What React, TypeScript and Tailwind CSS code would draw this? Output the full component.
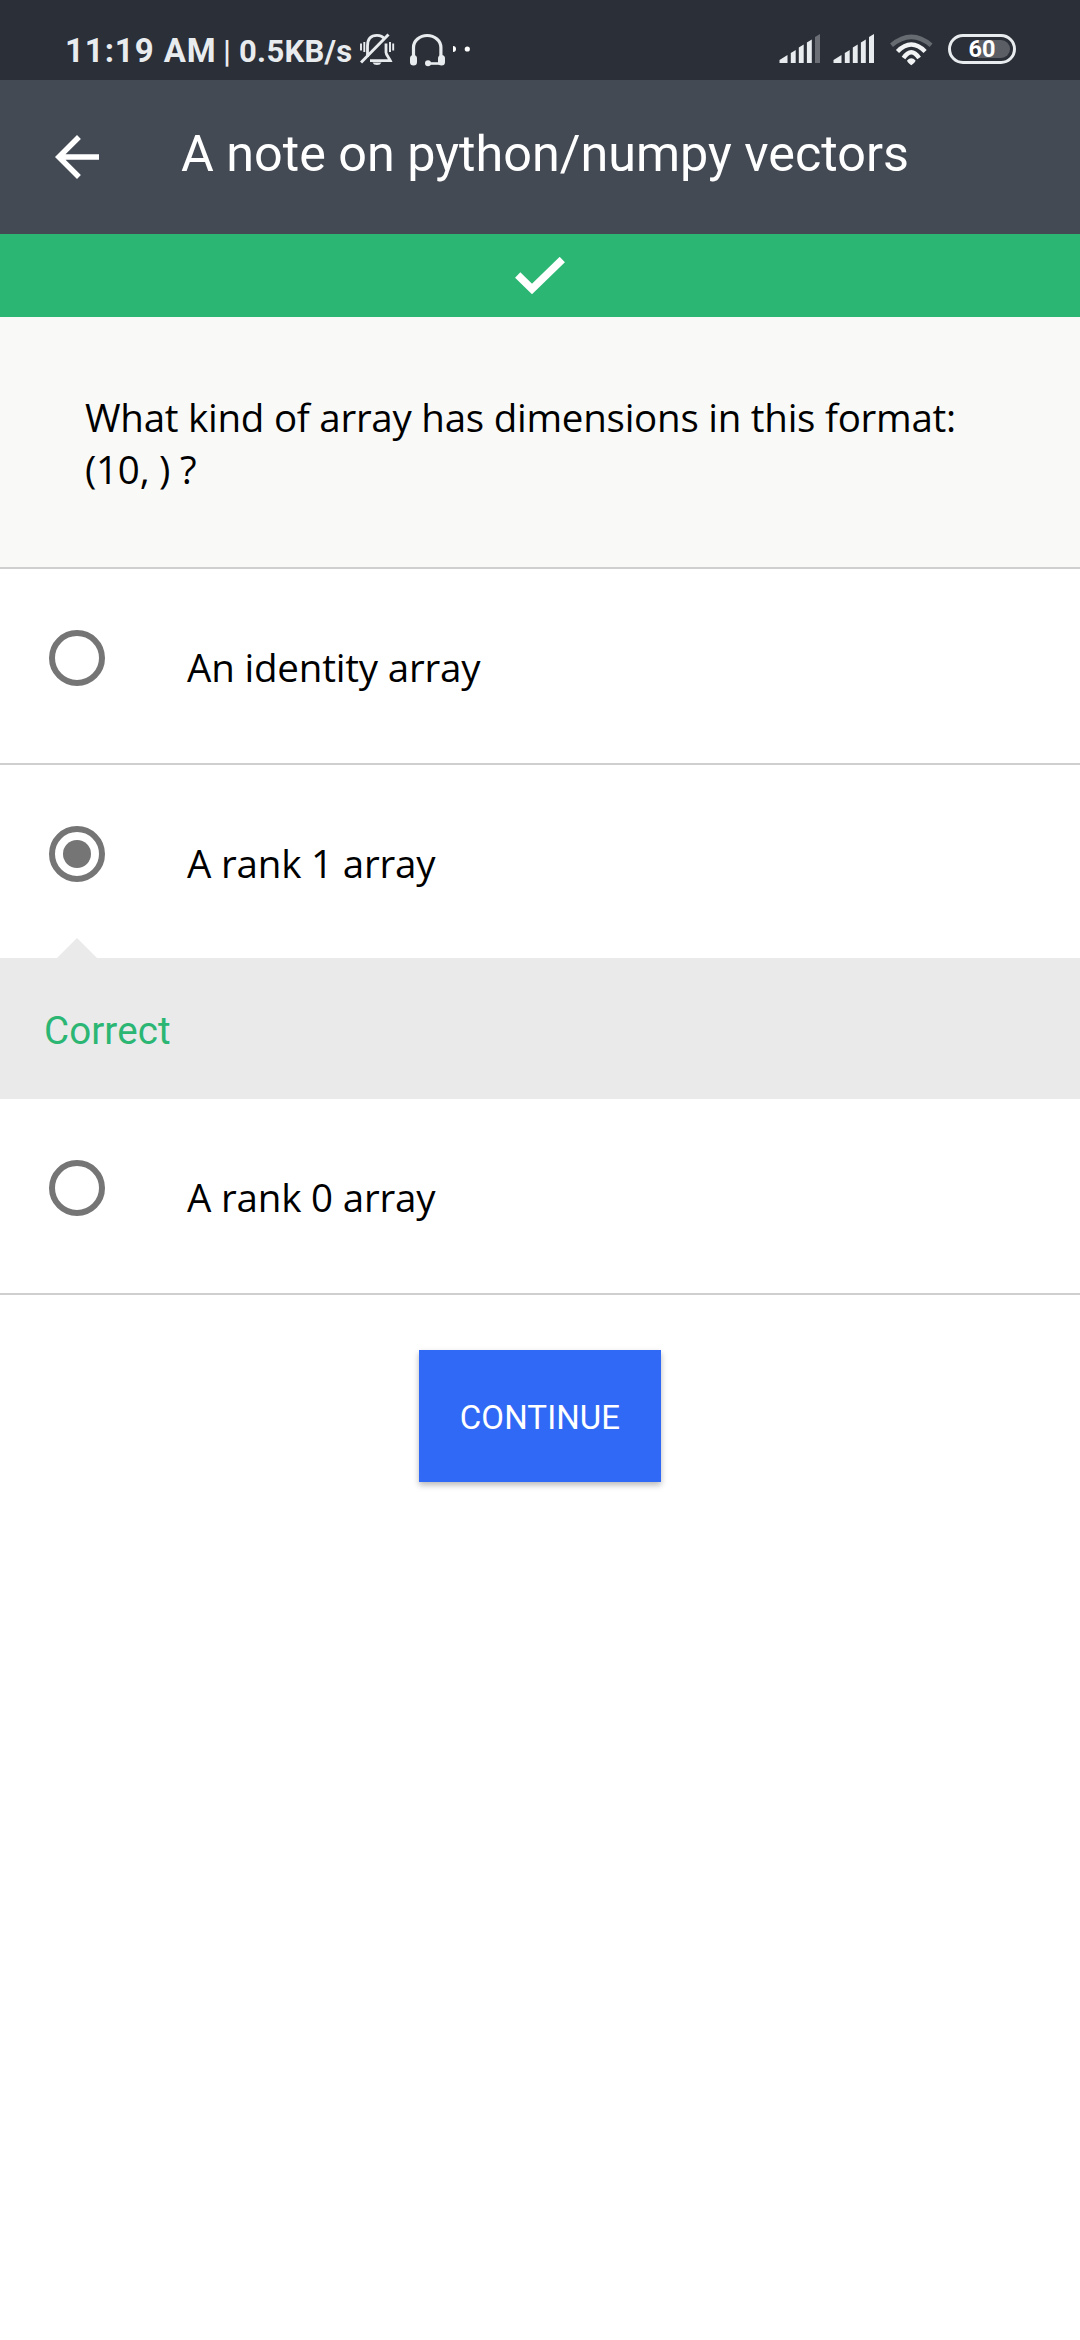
import React from "react";

function StatusBar() {
  return (
    <div className="flex h-[80px] items-center bg-[#2b2f37] pl-[65px] pr-[64px] pt-[20px] text-[#e9ecef]">
      <div className="flex h-full items-center whitespace-nowrap pt-[2px] font-bold">
        <span className="w-[152px] text-[33px] leading-[40px] tracking-[0.9px]">11:19 AM</span>
        <span className="ml-[6px] w-[16px] text-[32px] font-medium leading-[40px]">|</span>
        <span className="w-[115px] pt-[1px] text-[31px] leading-[40px] tracking-[0.3px]">0.5KB/s</span>
      </div>
      <svg className="ml-[6px] h-[40px] w-[110px]" viewBox="360 30 110 40" fill="none" stroke="#e9ecef" strokeWidth="2.8">
        <path d="M367.500 57V46C367.500 38.500 371.500 35.400 377 35.400c3.200 0 5.800 1.200 7.500 3.600M386 43.500v9c0 2 2.800 5 4.300 8.200h-20.300" />
        <path d="M361 62.500L388.500 34.500" strokeWidth="3" />
        <path d="M372.500 62.500h9a4.800 4 0 0 1-9 0z" fill="#e9ecef" stroke="none" />
        <path d="M361 43.500v7M364.300 42v10M390 42v10M393.200 43.500v7" strokeWidth="1.900" />
        <path d="M413.500 56V47.500a13.700 12 0 0 1 27.400 0V56" strokeWidth="3.200" />
        <path d="M429 63.500h12" strokeWidth="2.600" />
        <rect x="410" y="55" width="7" height="10.500" rx="3.500" fill="#e9ecef" stroke="none" />
        <rect x="438" y="55" width="7" height="10.500" rx="3.500" fill="#e9ecef" stroke="none" />
        <circle cx="428" cy="63.300" r="3" fill="#e9ecef" stroke="none" />
        <path d="M453 46a3 3 0 0 1 0 6z" fill="#fff" stroke="none" />
        <circle cx="467.300" cy="49" r="2.600" fill="#fff" stroke="none" />
      </svg>
      <div className="ml-auto flex items-center">
        <Signal dimLast />
        <Signal />
        <svg className="ml-[15px] h-[40px] w-[44px]" viewBox="889 30 44 40" fill="none" stroke="#f1f3f5" strokeWidth="4.400">
          <path d="M891.500 45.200Q911.300 28.500 931.100 45.200" stroke="#666a71" />
          <path d="M897.500 51.500Q911.300 37.500 925.100 51.500" />
          <path d="M903.500 58Q911.300 46.500 919.100 58" />
          <path d="M907 60.500q4.300-4.500 8.600 0q0 1.500-4.300 4.700q-4.300-3.200-4.300-4.700z" fill="#f1f3f5" stroke="none" />
        </svg>
        <div className="mb-[2px] ml-[15px] flex h-[30px] w-[68px] items-center rounded-full border-[3px] border-[#e9ecef] p-[3px]">
          <div className="flex h-full w-full items-center justify-center rounded-full bg-linear-to-r from-transparent from-42% to-[#5b5e64] to-42%">
            <span className="pt-[2px] text-[23.500px] font-bold leading-none text-white">60</span>
          </div>
        </div>
      </div>
    </div>
  );
}

function Signal({ dimLast = false }: { dimLast?: boolean }) {
  return (
    <svg className={dimLast ? "h-[40px] w-[41px]" : "ml-[13px] h-[40px] w-[41px]"} viewBox="779 30 41 40" fill="#e9ecef">
      <path d="M779.500 60l8-5V63h-8zM790.800 53l4.900-3v13h-4.900zM798.800 47.500l4.900-3V63h-4.900zM806.900 42.500l4.900-3V63h-4.900z" />
      <path d="M815 37l5-3v29h-5z" fill={dimLast ? "#6b6f75" : "#e9ecef"} />
    </svg>
  );
}

function Option({ label, checked = false }: { label: string; checked?: boolean }) {
  return (
    <div
      className={
        checked
          ? "flex h-[193px] items-start bg-white pl-[49px]"
          : "flex h-[196px] items-start border-b-2 border-[#cfcfcf] bg-white pl-[49px]"
      }
    >
      <div className="mt-[61px] flex size-[56px] items-center justify-center rounded-full border-[6px] border-[#757575]">
        {checked && <div className="size-[28px] rounded-full bg-[#757575]" />}
      </div>
      <span className="ml-[82px] mt-[72px] whitespace-nowrap font-['Open_Sans',sans-serif] text-[38.5px] leading-[52px] tracking-[-0.18px] text-black">
        {label}
      </span>
    </div>
  );
}

export default function App() {
  return (
    <div className="flex min-h-[2340px] w-[1080px] flex-col bg-white font-[Roboto,sans-serif]">
      <StatusBar />
      <header className="flex h-[154px] items-center bg-[#444a54] pl-[55px] text-white">
        <svg className="h-[44px] w-[44px]" viewBox="4 4 16 16" fill="currentColor">
          <path d="M20 11H7.830l5.590-5.590L12 4l-8 8 8 8 1.410-1.410L7.830 13H20v-2z" />
        </svg>
        <h1 className="mb-[6px] ml-[82px] whitespace-nowrap text-[50.3px] font-normal leading-[60px]">
          A note on python/numpy vectors
        </h1>
      </header>
      <div className="flex h-[83px] items-center justify-center bg-[#2bb673]">
        <svg className="h-[38px] w-[50px]" viewBox="0 0 50 38" fill="none" stroke="#fff" strokeWidth="7.500">
          <path d="M2.700 18L17 32L47.300 2.500" />
        </svg>
      </div>
      <section className="h-[252px] border-b-2 border-[#cfcfcf] bg-[#f9f9f8] pl-[85px] pr-[85px] pt-[74px]">
        <p className="whitespace-nowrap font-['Open_Sans',sans-serif] text-[38.5px] leading-[52px] tracking-[-0.25px] text-black">
          What kind of array has dimensions in this format:
          <br />
          (10, ) ?
        </p>
      </section>
      <Option label="An identity array" />
      <Option label="A rank 1 array" checked />
      <div className="relative flex h-[141px] items-center bg-[#eaeaea] pl-[44px] pt-[4px]">
        <div className="absolute -top-[20px] left-[57px] h-[20px] w-[40px] bg-[#eaeaea] [clip-path:polygon(50%_0,100%_100%,0_100%)]" />
        <span className="text-[38.5px] leading-[44px] tracking-[0.1px] text-[#2bb673]">Correct</span>
      </div>
      <Option label="A rank 0 array" />
      <button className="mx-auto mt-[55px] flex h-[132px] w-[242px] items-center justify-center bg-[#3069f6] pt-[3px] text-[33px] tracking-[0.1px] text-white shadow-[0_3px_6px_rgba(0,0,0,0.28)]">
        CONTINUE
      </button>
    </div>
  );
}
